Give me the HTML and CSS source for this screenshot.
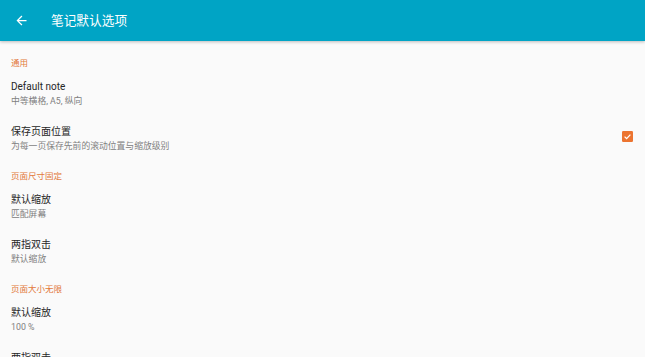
FILE: index.html
```html
<!DOCTYPE html>
<html lang="zh-CN">
<head>
<meta charset="utf-8">
<link rel="stylesheet" href="styles.css">
</head>
<body>
<header class="appbar">
  <svg class="back" width="15" height="15" viewBox="0 0 24 24"><path d="M20 11H7.83l5.59-5.59L12 4l-8 8 8 8 1.41-1.41L7.83 13H20v-2z" fill="#fff"/></svg>
  <div class="title">笔记默认选项</div>
</header>
<main class="content">
  <div class="cat">通用</div>
  <div class="item">
    <div class="text"><div class="t">Default note</div><div class="s">中等横格, A5, 纵向</div></div>
  </div>
  <div class="item">
    <div class="text"><div class="t">保存页面位置</div><div class="s">为每一页保存先前的滚动位置与缩放级别</div></div>
    <div class="check"><svg width="11" height="11" viewBox="0 0 11 11"><rect width="11" height="11" rx="1.2" fill="#ec7430"/><path d="M2.6 5.6l2 2 3.8-4" stroke="#fff" stroke-width="1.3" fill="none"/></svg></div>
  </div>
  <div class="cat">页面尺寸固定</div>
  <div class="item">
    <div class="text"><div class="t">默认缩放</div><div class="s">匹配屏幕</div></div>
  </div>
  <div class="item">
    <div class="text"><div class="t">两指双击</div><div class="s">默认缩放</div></div>
  </div>
  <div class="cat">页面大小无限</div>
  <div class="item">
    <div class="text"><div class="t">默认缩放</div><div class="s">100 %</div></div>
  </div>
  <div class="item">
    <div class="text"><div class="t">两指双击</div><div class="s">默认缩放</div></div>
  </div>
</main>
</body>
</html>
```
FILE: styles.css
```css
html, body {
  margin: 0;
  padding: 0;
  background: #fafafa;
  font-family: Roboto, "Noto Sans CJK SC", sans-serif;
  overflow: hidden;
  height: 357px;
}
.appbar {
  height: 41px;
  background: #00a4c5;
  display: flex;
  align-items: center;
  box-shadow: 0 1px 3px rgba(0,0,0,0.25);
  position: relative;
  z-index: 1;
}
.back {
  margin-left: 14px;
  width: 15px;
  height: 15px;
}
.title {
  margin-left: 22px;
  color: #fff;
  font-size: 12.7px;
  line-height: 16px;
  padding-top: 1px;
}
.content {
  padding-top: 16px;
}
.cat {
  height: 23px;
  box-sizing: border-box;
  padding-left: 11px;
  font-size: 8.5px;
  line-height: 12px;
  color: #e2793a;
}
.item {
  height: 45px;
  box-sizing: border-box;
  display: flex;
  justify-content: space-between;
  align-items: flex-start;
  padding: 1px 12px 0 11px;
}
.t {
  font-size: 10px;
  line-height: 12px;
  color: #262626;
}
.s {
  margin-top: 1.5px;
  font-size: 8.8px;
  line-height: 12px;
  color: #808080;
}
.check {
  margin-top: 5px;
  width: 11px;
  height: 11px;
}
.check svg {
  display: block;
}
```
